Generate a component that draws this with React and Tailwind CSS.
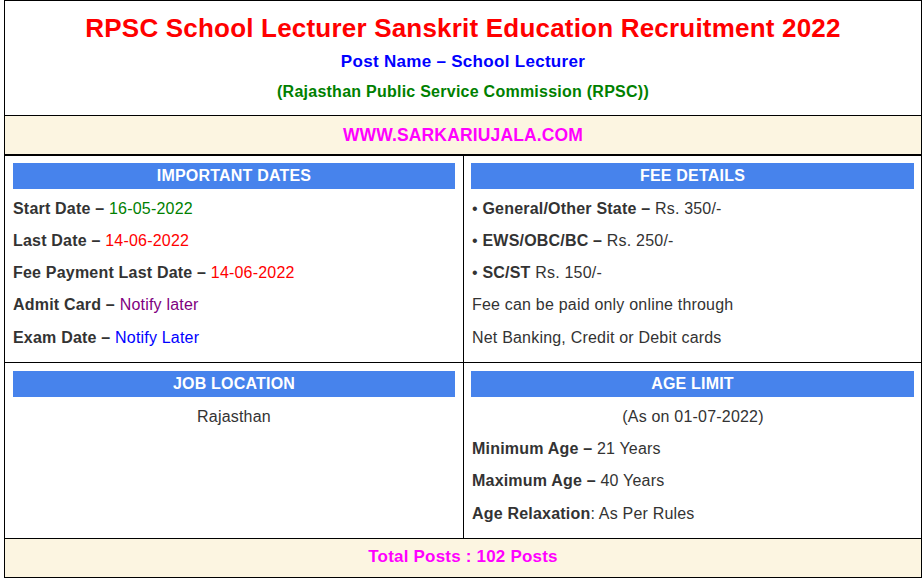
import React from "react";

const font = { fontFamily: '"Liberation Sans", Arial, sans-serif' };

function Head({ children }) {
  return (
    <div className="h-[26px] bg-[#4783ec] text-center text-[16px] font-bold leading-[26px] tracking-[0.2px] text-white">
      {children}
    </div>
  );
}

function Line({ children, center }) {
  return <div className={"leading-[32.33px] " + (center ? "text-center" : "")}>{children}</div>;
}

export default function App() {
  return (
    <div className="min-h-[581px] bg-white" style={font}>
      <div className="ml-[4px] w-[918px] border-x border-t border-black text-[16px] tracking-[0.2px] text-[#333333]">
        <div className="h-[115px] border-b border-black pt-[12px] text-center font-bold">
          <div className="text-[26px] leading-[30px] tracking-[0.2px] text-[#ff0000]">
            RPSC School Lecturer Sanskrit Education Recruitment 2022
          </div>
          <div className="mt-[4px] text-[17px] leading-[30px] tracking-[0.3px] text-[#0000ff]">Post Name – School Lecturer</div>
          <div className="text-[16px] leading-[30px] tracking-[0.25px] text-[#008000]">(Rajasthan Public Service Commission (RPSC))</div>
        </div>
        <div className="h-[40px] border-b-2 border-black bg-[#fcf5e1] text-center text-[17.5px] font-bold leading-[38px] tracking-[0.15px] text-[#ff00ff]">
          WWW.SARKARIUJALA.COM
        </div>
        <div className="grid grid-cols-[459px_457px] border-b border-black">
          <div className="border-r border-black px-[8px] pt-[7px] pb-[8px]">
            <Head>IMPORTANT DATES</Head>
            <div className="mt-[3.5px]">
              <Line><b>Start Date –</b> <span className="text-[#008000]">16-05-2022</span></Line>
              <Line><b>Last Date –</b> <span className="text-[#ff0000]">14-06-2022</span></Line>
              <Line><b>Fee Payment Last Date –</b> <span className="text-[#ff0000]">14-06-2022</span></Line>
              <Line><b>Admit Card –</b> <span className="text-[#800080]">Notify later</span></Line>
              <Line><b>Exam Date –</b> <span className="text-[#0000ff]">Notify Later</span></Line>
            </div>
          </div>
          <div className="px-[7px] pt-[7px] pb-[8px]">
            <Head>FEE DETAILS</Head>
            <div className="mt-[3.5px] pl-[1px]">
              <Line>• <b>General/Other State –</b> Rs. 350/-</Line>
              <Line>• <b>EWS/OBC/BC –</b> Rs. 250/-</Line>
              <Line>• <b>SC/ST</b> Rs. 150/-</Line>
              <Line>Fee can be paid only online through</Line>
              <Line>Net Banking, Credit or Debit cards</Line>
            </div>
          </div>
        </div>
        <div className="grid grid-cols-[459px_457px] border-b border-black">
          <div className="border-r border-black px-[8px] pt-[8px] pb-[8px]">
            <Head>JOB LOCATION</Head>
            <div className="mt-[3.5px]">
              <Line center>Rajasthan</Line>
            </div>
          </div>
          <div className="px-[7px] pt-[8px] pb-[8px]">
            <Head>AGE LIMIT</Head>
            <div className="mt-[3.5px] pl-[1px]">
              <Line center>(As on 01-07-2022)</Line>
              <Line><b>Minimum Age –</b> 21 Years</Line>
              <Line><b>Maximum Age –</b> 40 Years</Line>
              <Line><b>Age Relaxation</b>: As Per Rules</Line>
            </div>
          </div>
        </div>
        <div className="h-[39px] border-b border-black bg-[#fcf5e1] text-center text-[17px] font-bold leading-[36px] tracking-[0.2px] text-[#ff00ff]">
          Total Posts : 102 Posts
        </div>
      </div>
    </div>
  );
}
